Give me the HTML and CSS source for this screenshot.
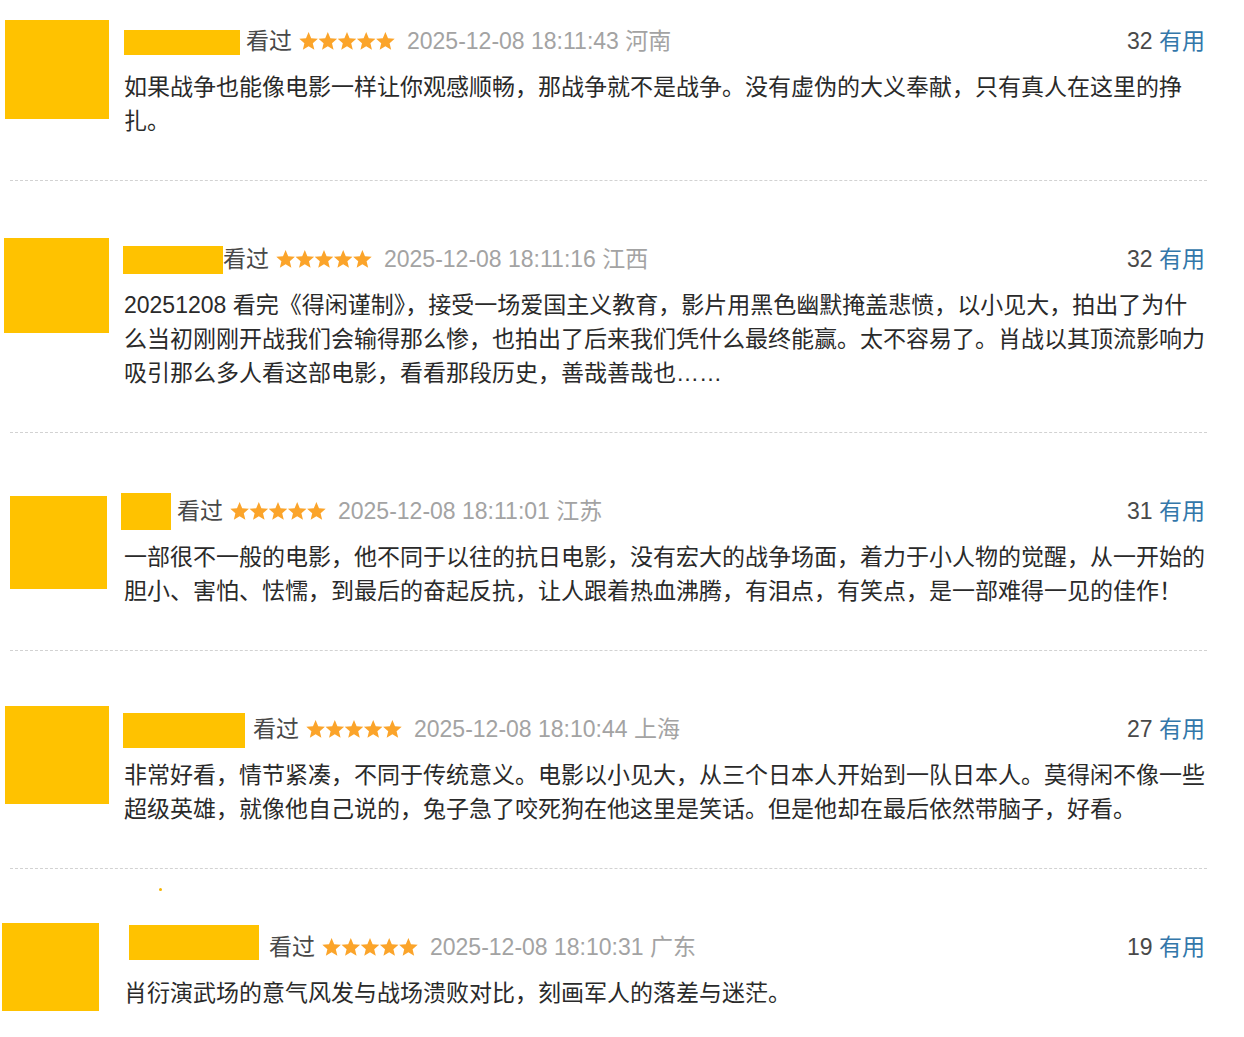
FILE: index.html
```html
<!DOCTYPE html>
<html lang="zh-CN">
<head>
<meta charset="utf-8">
<title>短评</title>
<link rel="stylesheet" href="styles.css">
</head>
<body>
<svg class="defs" width="0" height="0" aria-hidden="true">
  <defs>
    <polygon id="star" points="0,-9.8 2.6,-3.6 9.3,-3.03 4.2,1.37 5.76,7.93 0,4.4 -5.76,7.93 -4.2,1.37 -9.3,-3.03 -2.6,-3.6"/>
  </defs>
</svg>
<div class="list">
  <div class="item item-1">
    <div class="avatar-col"><div class="avatar"></div></div>
    <div class="main">
      <div class="info">
        <span class="name-box"></span>
        <span class="watched">看过</span>
        <svg class="stars" viewBox="0 0 96 34"><use href="#star" x="9.6" y="17.9"/><use href="#star" x="28.8" y="17.9"/><use href="#star" x="48" y="17.9"/><use href="#star" x="67.2" y="17.9"/><use href="#star" x="86.4" y="17.9"/></svg>
        <span class="time">2025-12-08 18:11:43 河南</span>
        <span class="votes"><span class="count">32</span> <a class="useful">有用</a></span>
      </div>
      <p class="comment">如果战争也能像电影一样让你观感顺畅，那战争就不是战争。没有虚伪的大义奉献，只有真人在这里的挣扎。</p>
    </div>
  </div>
  <div class="item item-2">
    <div class="avatar-col"><div class="avatar"></div></div>
    <div class="main">
      <div class="info">
        <span class="name-box"></span>
        <span class="watched">看过</span>
        <svg class="stars" viewBox="0 0 96 34"><use href="#star" x="9.6" y="17.9"/><use href="#star" x="28.8" y="17.9"/><use href="#star" x="48" y="17.9"/><use href="#star" x="67.2" y="17.9"/><use href="#star" x="86.4" y="17.9"/></svg>
        <span class="time">2025-12-08 18:11:16 江西</span>
        <span class="votes"><span class="count">32</span> <a class="useful">有用</a></span>
      </div>
      <p class="comment">20251208 看完《得闲谨制》，接受一场爱国主义教育，影片用黑色幽默掩盖悲愤，以小见大，拍出了为什么当初刚刚开战我们会输得那么惨，也拍出了后来我们凭什么最终能赢。太不容易了。肖战以其顶流影响力吸引那么多人看这部电影，看看那段历史，善哉善哉也……</p>
    </div>
  </div>
  <div class="item item-3">
    <div class="avatar-col"><div class="avatar"></div></div>
    <div class="main">
      <div class="info">
        <span class="name-box"></span>
        <span class="watched">看过</span>
        <svg class="stars" viewBox="0 0 96 34"><use href="#star" x="9.6" y="17.9"/><use href="#star" x="28.8" y="17.9"/><use href="#star" x="48" y="17.9"/><use href="#star" x="67.2" y="17.9"/><use href="#star" x="86.4" y="17.9"/></svg>
        <span class="time">2025-12-08 18:11:01 江苏</span>
        <span class="votes"><span class="count">31</span> <a class="useful">有用</a></span>
      </div>
      <p class="comment">一部很不一般的电影，他不同于以往的抗日电影，没有宏大的战争场面，着力于小人物的觉醒，从一开始的胆小、害怕、怯懦，到最后的奋起反抗，让人跟着热血沸腾，有泪点，有笑点，是一部难得一见的佳作！</p>
    </div>
  </div>
  <div class="item item-4">
    <div class="avatar-col"><div class="avatar"></div></div>
    <div class="main">
      <div class="info">
        <span class="name-box"></span>
        <span class="watched">看过</span>
        <svg class="stars" viewBox="0 0 96 34"><use href="#star" x="9.6" y="17.9"/><use href="#star" x="28.8" y="17.9"/><use href="#star" x="48" y="17.9"/><use href="#star" x="67.2" y="17.9"/><use href="#star" x="86.4" y="17.9"/></svg>
        <span class="time">2025-12-08 18:10:44 上海</span>
        <span class="votes"><span class="count">27</span> <a class="useful">有用</a></span>
      </div>
      <p class="comment">非常好看，情节紧凑，不同于传统意义。电影以小见大，从三个日本人开始到一队日本人。莫得闲不像一些超级英雄，就像他自己说的，兔子急了咬死狗在他这里是笑话。但是他却在最后依然带脑子，好看。</p>
    </div>
  </div>
  <div class="item item-5">
    <span class="speck"></span>
    <div class="avatar-col"><div class="avatar"></div></div>
    <div class="main">
      <div class="info">
        <span class="name-box"></span>
        <span class="watched">看过</span>
        <svg class="stars" viewBox="0 0 96 34"><use href="#star" x="9.6" y="17.9"/><use href="#star" x="28.8" y="17.9"/><use href="#star" x="48" y="17.9"/><use href="#star" x="67.2" y="17.9"/><use href="#star" x="86.4" y="17.9"/></svg>
        <span class="time">2025-12-08 18:10:31 广东</span>
        <span class="votes"><span class="count">19</span> <a class="useful">有用</a></span>
      </div>
      <p class="comment">肖衍演武场的意气风发与战场溃败对比，刻画军人的落差与迷茫。</p>
    </div>
  </div>
</div>
</body>
</html>
```
FILE: styles.css
```css
html, body {
  margin: 0;
  padding: 0;
  background: #ffffff;
}

body {
  font-family: "Liberation Sans", "Noto Sans CJK SC", sans-serif;
  color: #333333;
}

.defs {
  position: absolute;
  width: 0;
  height: 0;
  overflow: hidden;
}

.list {
  width: 1244px;
}

.item {
  position: relative;
  display: flex;
  margin-left: 10px;
  width: 1197px;
  padding: 61px 0 42px;
  border-bottom: 1px dashed #d2d2d2;
}

.item-1 {
  padding-top: 24px;
}

.item-5 {
  border-bottom: none;
}

.avatar-col {
  flex: none;
  width: 114px;
}

.avatar {
  background: #ffc200;
}

.item-1 .avatar { width: 104px; height: 99px; margin: -4px 0 0 -5px; }
.item-2 .avatar { width: 105px; height: 95px; margin: -4px 0 0 -6px; }
.item-3 .avatar { width: 97px;  height: 93px; margin: 2px 0 0 0; }
.item-4 .avatar { width: 104px; height: 98px; margin: -6px 0 0 -5px; }
.item-5 .avatar { width: 97px;  height: 88px; margin: -7px 0 0 -8px; }

.main {
  flex: none;
  width: 1085px;
}

.info {
  display: flex;
  align-items: flex-start;
  height: 34px;
  line-height: 34px;
  font-size: 23px;
  color: #494949;
  padding-right: 4px;
  white-space: nowrap;
}

.name-box {
  flex: none;
  background: #ffc200;
}

.item-1 .name-box { width: 116px; height: 25px; margin: 6px 6px 0 0; }
.item-2 .name-box { width: 100px; height: 28px; margin: 4px 0 0 -1px; }
.item-3 .name-box { width: 50px;  height: 37px; margin: -1px 6px 0 -3px; }
.item-4 .name-box { width: 122px; height: 35px; margin: 1px 8px 0 -1px; }
.item-5 .name-box { width: 130px; height: 35px; margin: -5px 10px 0 5px; }

.watched {
  flex: none;
}

.stars {
  flex: none;
  width: 96px;
  height: 34px;
  margin: 0 12px 0 7px;
  fill: #fba42a;
}

.time {
  color: #a3a3a3;
  font-size: 23px;
}

.votes {
  margin-left: auto;
}

.count {
  color: #494949;
}

.useful {
  color: #3377aa;
  text-decoration: none;
}

.comment {
  margin: 12px 0 0;
  font-size: 23px;
  line-height: 34px;
  color: #2a2a2a;
}

.speck {
  position: absolute;
  left: 149px;
  top: 19px;
  width: 3px;
  height: 3px;
  border-radius: 50%;
  background: #f7b400;
}
```
